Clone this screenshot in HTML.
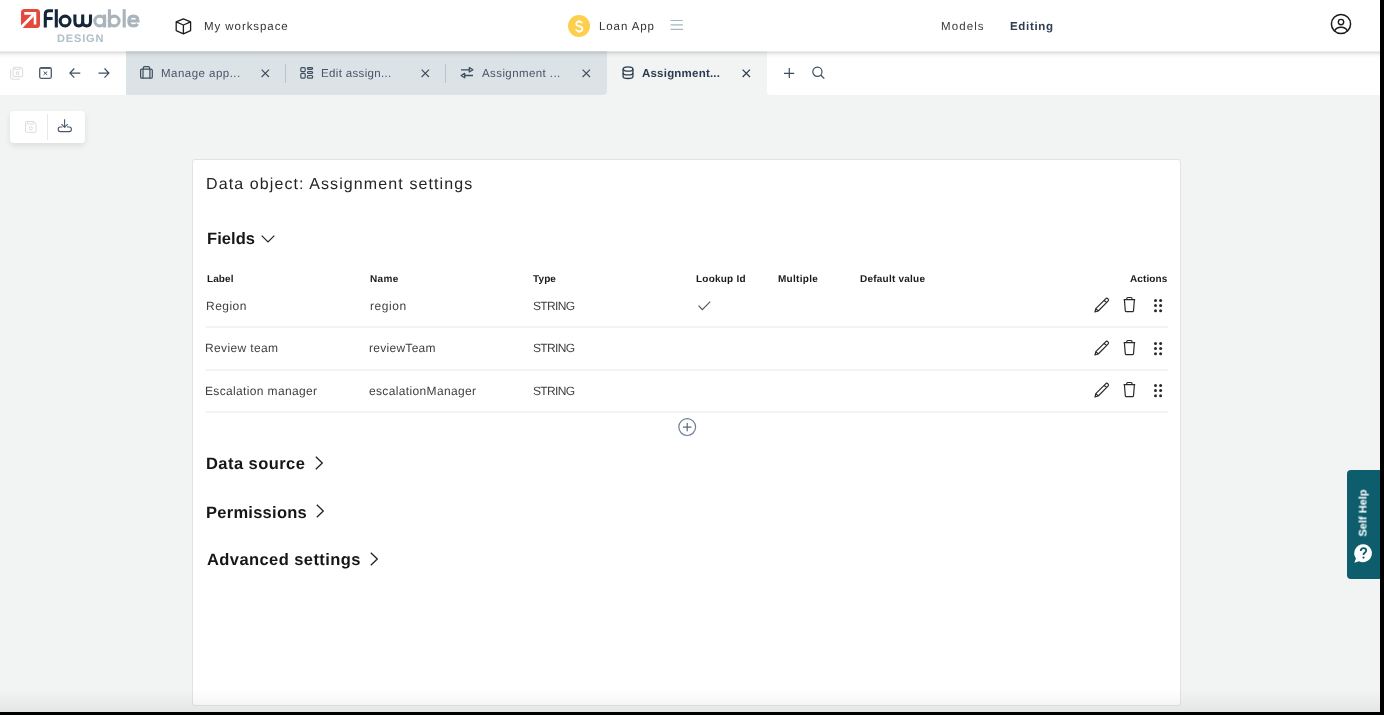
<!DOCTYPE html>
<html><head><meta charset="utf-8">
<style>
*{box-sizing:border-box;margin:0;padding:0}
html,body{width:1384px;height:715px;overflow:hidden;background:#000}
body{font-family:"Liberation Sans",sans-serif;position:relative;text-rendering:geometricPrecision}
#app{position:absolute;left:0;top:0;width:1380px;height:712px;background:#f2f4f4;overflow:hidden}
.a{position:absolute;white-space:nowrap;line-height:1;will-change:transform}
.s12{font-size:12px}
.s115{font-size:11.5px}
.s10{font-size:10px;font-weight:700;color:#1b1b1b}
.s16{font-size:16px}
svg{position:absolute;overflow:visible}
#hdr{position:absolute;left:0;top:0;width:1380px;height:51px;background:#fff}
#tabbar{position:absolute;left:0;top:51px;width:1380px;height:43.6px}
.tab{position:absolute;top:0;height:43.6px;background:#dce3e6}
.tabtxt{color:#475667}
.div{position:absolute;width:1px;background:#b9c4ca}
#card{position:absolute;left:192px;top:159px;width:989px;height:547px;background:#fff;border:1px solid #dfe3e8;border-radius:3px}
.sep{position:absolute;left:206px;width:962px;height:2px;background:#f2f3f5}
.body{color:#3f3f3f}
</style></head><body>
<div id="app">
  <!-- header -->
  <div id="hdr"></div>
  <!-- logo -->
  <svg style="left:0;top:0" width="150" height="50" viewBox="0 0 150 50">
        <rect x="21" y="9" width="19" height="19" rx="3.5" fill="#e34a3b"/>
    <path d="M24.3 13.4H35V24.6" fill="none" stroke="#fff" stroke-width="2.6" stroke-linejoin="miter"/>
    <path d="M33.6 14.8L19 29.4" fill="none" stroke="#fff" stroke-width="2.8"/>
    <g fill="none" stroke="#15263a" stroke-width="3.1">
      <path d="M45.3 27.5V14.2Q45.3 10.7 48.8 10.7H53"/>
      <path d="M45.3 18.5H52.6"/>
      <path d="M56.3 9.2V27.5"/>
      <circle cx="65.1" cy="21" r="4.9"/>
      <path d="M74.9 14.5V21.5Q74.9 25.9 78.8 25.9Q82.7 25.9 82.7 21.5V14.5M82.7 21.5Q82.7 25.9 86.6 25.9Q90.5 25.9 90.5 21.5V14.5"/>
    </g>
    <g fill="none" stroke="#a9b4bd" stroke-width="3.1">
      <circle cx="99.7" cy="21" r="4.9"/>
      <path d="M104.6 14.5V27.5"/>
      <path d="M109.4 9.2V27.5"/>
      <circle cx="114.2" cy="21" r="4.9"/>
      <path d="M124.2 9.2V27.5"/>
      <path d="M128.9 21H138Q138 16.1 133.4 16.1Q128.8 16.1 128.8 21Q128.8 25.9 133.4 25.9Q136.3 25.9 137.6 24"/>
    </g>
  </svg>
  <div class="a" style="left:56.8px;top:34.0px;font-size:11px;font-weight:700;color:#afc0c8;letter-spacing:0.86px">DESIGN</div>

  <!-- workspace -->
  <svg style="left:175px;top:17.5px" width="17" height="17" viewBox="0 0 17 17">
    <path d="M8.4 0.8L15.6 3.9V12.6L8.4 15.8L1.2 12.6V3.9Z M1.2 3.9L8.4 7L15.6 3.9 M8.4 7V15.8" fill="none" stroke="#1e1e1e" stroke-width="1.3" stroke-linejoin="round"/>
  </svg>
  <div class="a s115" style="left:204.0px;top:21.7px;color:#333;letter-spacing:0.93px">My workspace</div>

  <!-- loan app -->
  <div style="position:absolute;left:567.7px;top:14.5px;width:22.3px;height:22.3px;border-radius:50%;background:#fdcf4e"></div>
  <svg style="left:567.7px;top:14.5px" width="23" height="23" viewBox="0 0 23 23">
    <path d="M14.3 8.2Q13.6 6.6 11.2 6.6Q8.3 6.6 8.3 8.8Q8.3 10.6 11.2 11.1Q14.4 11.7 14.4 13.9Q14.4 16.3 11.2 16.3Q8.6 16.3 7.9 14.5 M11.2 4.9V6.6 M11.2 16.3V18.1" fill="none" stroke="#fff" stroke-width="1.7"/>
  </svg>
  <div class="a s115" style="left:599.4px;top:21.8px;color:#333;letter-spacing:0.9px">Loan App</div>
  <svg style="left:670px;top:19px" width="14" height="12" viewBox="0 0 14 12">
    <path d="M0.6 1.5H12.9M0.6 5.8H12.9M0.6 10.4H12.9" stroke="#a3b7c1" stroke-width="1.2"/>
  </svg>

  <div class="a s115" style="left:941.0px;top:21.8px;color:#3b3b3b;letter-spacing:1.1px">Models</div>
  <div class="a s115" style="left:1010.0px;top:21.8px;color:#2d3e50;font-weight:700;letter-spacing:0.69px">Editing</div>
  <svg style="left:1329.5px;top:13.4px" width="22" height="22" viewBox="0 0 22 22">
    <circle cx="11" cy="11" r="9.6" fill="none" stroke="#1a1a1a" stroke-width="1.5"/>
    <circle cx="11" cy="9.1" r="2.7" fill="none" stroke="#1a1a1a" stroke-width="1.4"/>
    <path d="M4.6 18.3Q5.6 14.2 11 14.2Q16.4 14.2 17.4 18.3" fill="none" stroke="#1a1a1a" stroke-width="1.4"/>
  </svg>

  <!-- tab bar -->
  <div id="tabbar">
    <div style="position:absolute;left:0;top:0;width:126px;height:43.6px;background:#fff"></div>
    <div class="tab" style="left:126px;width:480.5px;border-bottom-right-radius:4px"></div>
    <div style="position:absolute;left:766.8px;top:0;width:613.2px;height:43.6px;background:#fff;border-bottom-left-radius:4px"></div>
  </div>
  <!-- header shadow -->
  <div style="position:absolute;left:0;top:51px;width:1380px;height:7px;background:linear-gradient(rgba(0,0,0,0.04) 0px,rgba(0,0,0,0.12) 1.5px,rgba(0,0,0,0.06) 3px,rgba(0,0,0,0.02) 5px,rgba(0,0,0,0) 7px)"></div>

  <!-- tab bar left icons -->
  <svg style="left:5px;top:62px" width="22" height="20" viewBox="0 0 22 20">
    <g fill="none" stroke="#dedfe0" stroke-width="1.1" stroke-linejoin="round">
      <path d="M9.3 5.2H15.6L17.6 7.2V13.4Q17.6 14.6 16.4 14.6H9.3Q8.1 14.6 8.1 13.4V6.4Q8.1 5.2 9.3 5.2Z"/>
      <path d="M9.6 5.2V7.2H14.8V5.2"/>
      <circle cx="12.6" cy="11.2" r="1.3"/>
      <path d="M5.6 7.2V14.8Q5.6 17.3 8.1 17.3H15"/>
    </g>
  </svg>
  <svg style="left:39px;top:67px" width="13" height="12" viewBox="0 0 13 12">
    <rect x="0.7" y="0.7" width="11.6" height="10.6" rx="1.5" fill="none" stroke="#4a5a6c" stroke-width="1.3"/>
    <path d="M1.2 1.4H11.8" stroke="#4a5a6c" stroke-width="1"/>
    <path d="M4.6 4.5L8.2 7.9M8.2 4.5L4.6 7.9" stroke="#3d4e61" stroke-width="1"/>
  </svg>
  <svg style="left:68.5px;top:68px" width="12" height="11" viewBox="0 0 12 11">
    <path d="M11.3 5.1H0.9M5.3 0.5L0.9 5.1L5.3 9.6" fill="none" stroke="#3d4e61" stroke-width="1.2"/>
  </svg>
  <svg style="left:97.5px;top:68px" width="12" height="11" viewBox="0 0 12 11">
    <path d="M0.5 5.1H10.9M6.5 0.5L10.9 5.1L6.5 9.6" fill="none" stroke="#3d4e61" stroke-width="1.2"/>
  </svg>

  <!-- tab 1 -->
  <svg style="left:140px;top:66px" width="14" height="13" viewBox="0 0 14 13">
    <g fill="none" stroke="#3d4e61" stroke-width="1.2">
      <rect x="0.6" y="3.1" width="11.7" height="9.1" rx="1.3"/>
      <path d="M3.4 3.1V1.7Q3.4 0.6 4.5 0.6H8.4Q9.5 0.6 9.5 1.7V3.1"/>
      <path d="M3 3.1V12.2M9.9 3.1V12.2"/>
    </g>
  </svg>
  <div class="a s115 tabtxt" style="left:160.6px;top:68.9px;letter-spacing:0.47px">Manage app...</div>
  <svg style="left:261px;top:69px" width="9" height="9" viewBox="0 0 9 9"><path d="M0.6 0.6L8 8M8 0.6L0.6 8" stroke="#3d4e61" stroke-width="1.15"/></svg>
  <div class="div" style="left:285px;top:64px;height:19px"></div>

  <!-- tab 2 -->
  <svg style="left:296px;top:62px" width="24" height="22" viewBox="0 0 24 22">
    <g fill="none" stroke="#3d4e61" stroke-width="1.2">
      <rect x="4.8" y="5.7" width="4.4" height="4" rx="1.1"/>
      <rect x="4.8" y="11.4" width="4.4" height="4.8" rx="1.1"/>
      <rect x="11.5" y="5.7" width="5.1" height="1.6" rx="0.8"/>
      <rect x="11.5" y="9.5" width="5.1" height="1.8" rx="0.9"/>
      <rect x="11.5" y="13.5" width="5.1" height="2.7" rx="1"/>
    </g>
  </svg>
  <div class="a s115 tabtxt" style="left:320.8px;top:68.9px;letter-spacing:0.34px">Edit assign...</div>
  <svg style="left:421px;top:69px" width="9" height="9" viewBox="0 0 9 9"><path d="M0.6 0.6L8 8M8 0.6L0.6 8" stroke="#3d4e61" stroke-width="1.15"/></svg>
  <div class="div" style="left:445px;top:64px;height:19px"></div>

  <!-- tab 3 -->
  <svg style="left:456px;top:62px" width="24" height="22" viewBox="0 0 24 22">
    <g fill="none" stroke="#3d4e61" stroke-width="1.3" stroke-linejoin="round">
      <path d="M5 7.8H13M9 13.5H17"/>
      <path d="M13.3 5.6L16.9 7.8L13.3 10Z"/>
      <path d="M8.7 11.3L5.1 13.5L8.7 15.7Z"/>
    </g>
  </svg>
  <div class="a s115 tabtxt" style="left:482.0px;top:68.9px;letter-spacing:0.41px">Assignment ...</div>
  <svg style="left:582px;top:69px" width="9" height="9" viewBox="0 0 9 9"><path d="M0.6 0.6L8 8M8 0.6L0.6 8" stroke="#3d4e61" stroke-width="1.15"/></svg>

  <!-- tab 4 active -->
  <svg style="left:621.5px;top:65.8px" width="12" height="14" viewBox="0 0 12 14">
    <g fill="none" stroke="#2b3c50" stroke-width="1.3">
      <ellipse cx="6" cy="3" rx="4.9" ry="2.2"/>
      <path d="M1.1 3V10.4Q1.1 12.5 6 12.5Q10.9 12.5 10.9 10.4V3"/>
      <path d="M1.1 6.9Q1.1 8.9 6 8.9Q10.9 8.9 10.9 6.9"/>
    </g>
  </svg>
  <div class="a s115" style="left:642.2px;top:68.9px;color:#2b3c50;font-weight:700;letter-spacing:0.21px">Assignment...</div>
  <svg style="left:742px;top:69px" width="9" height="9" viewBox="0 0 9 9"><path d="M0.6 0.6L8 8M8 0.6L0.6 8" stroke="#2b3c50" stroke-width="1.25"/></svg>

  <!-- plus / search -->
  <svg style="left:784px;top:67.9px" width="11" height="11" viewBox="0 0 11 11"><path d="M5.3 0V10M0 5.3H10.2" stroke="#3d4e61" stroke-width="1.2"/></svg>
  <svg style="left:811.5px;top:67px" width="14" height="13" viewBox="0 0 14 13">
    <circle cx="5.4" cy="4.7" r="4.6" fill="none" stroke="#3d4e61" stroke-width="1.2"/>
    <path d="M8.7 8L12.3 11.6" stroke="#3d4e61" stroke-width="1.3"/>
  </svg>

  <!-- floating toolbar -->
  <div style="position:absolute;left:10px;top:111px;width:75px;height:32px;background:#fff;border-radius:4px;box-shadow:0 3px 6px rgba(0,0,0,0.09)"></div>
  <div class="div" style="left:47px;top:114px;height:26px;background:#e6e9eb"></div>
  <svg style="left:24.5px;top:121px" width="12" height="12" viewBox="0 0 12 12">
    <g fill="none" stroke="#dadcde" stroke-width="1" stroke-linejoin="round">
      <path d="M1.5 0.5H8.8L11 2.7V10.3Q11 11.3 10 11.3H1.5Q0.5 11.3 0.5 10.3V1.5Q0.5 0.5 1.5 0.5Z"/>
      <path d="M2.3 0.8V3H8.4V0.8"/>
      <circle cx="5.8" cy="7.3" r="1.6"/>
    </g>
  </svg>
  <svg style="left:57px;top:118px" width="16" height="16" viewBox="0 0 16 16">
    <g fill="none" stroke="#4a5a6c" stroke-width="1.1" stroke-linejoin="round">
      <path d="M7.6 1.2V9.4M4.5 6.1L7.6 9.4L10.7 6.1"/>
      <path d="M5.3 9H3.2Q1.2 9 1.2 11.3Q1.2 13.6 3.2 13.6H12.4Q14.4 13.6 14.4 11.3Q14.4 9 12.4 9H10"/>
    </g>
  </svg>

  <!-- card -->
  <div id="card"></div>
  <div class="a s16" style="left:206.0px;top:176.6px;color:#242424;letter-spacing:1.1px">Data object: Assignment settings</div>

  <div class="a" style="font-size:16.5px;left:206.5px;top:231.4px;color:#161616;font-weight:700;letter-spacing:0.07px">Fields</div>
  <svg style="left:261px;top:235px" width="14" height="8" viewBox="0 0 14 8"><path d="M0.7 0.7L7 7L13.3 0.7" fill="none" stroke="#222" stroke-width="1.2"/></svg>

  <!-- table headers -->
  <div class="a s10" style="left:207.0px;top:274.5px;letter-spacing:0.09px">Label</div>
  <div class="a s10" style="left:369.8px;top:274.5px;letter-spacing:0.39px">Name</div>
  <div class="a s10" style="left:533.0px;top:274.5px;letter-spacing:0.1px">Type</div>
  <div class="a s10" style="left:696.0px;top:274.5px;letter-spacing:0.22px">Lookup Id</div>
  <div class="a s10" style="left:777.8px;top:274.5px;letter-spacing:0.29px">Multiple</div>
  <div class="a s10" style="left:860.0px;top:274.5px;letter-spacing:0.23px">Default value</div>
  <div class="a s10" style="left:1130.0px;top:274.5px;letter-spacing:0.11px">Actions</div>

  <!-- rows -->
  <div class="a s12 body" style="left:206.0px;top:299.8px;letter-spacing:0.47px">Region</div>
  <div class="a s12 body" style="left:369.8px;top:299.8px;letter-spacing:0.57px">region</div>
  <div class="a s12 body" style="left:533px;top:299.8px;letter-spacing:-0.67px">STRING</div>
  <svg style="left:698px;top:300.5px" width="13" height="10" viewBox="0 0 13 10"><path d="M0.6 4.6L4.3 8.6L12.2 0.7" fill="none" stroke="#555" stroke-width="1.2"/></svg>
  <div class="sep" style="top:326px"></div>

  <div class="a s12 body" style="left:205.0px;top:342.3px;letter-spacing:0.36px">Review team</div>
  <div class="a s12 body" style="left:369.0px;top:342.3px;letter-spacing:0.28px">reviewTeam</div>
  <div class="a s12 body" style="left:533px;top:342.3px;letter-spacing:-0.67px">STRING</div>
  <div class="sep" style="top:368.5px"></div>

  <div class="a s12 body" style="left:205.0px;top:384.9px;letter-spacing:0.35px">Escalation manager</div>
  <div class="a s12 body" style="left:369.0px;top:384.9px;letter-spacing:0.35px">escalationManager</div>
  <div class="a s12 body" style="left:533px;top:384.9px;letter-spacing:-0.67px">STRING</div>
  <div class="sep" style="top:411px"></div>

  <!-- action icons rows -->
  <svg style="left:1093.5px;top:297px" width="72" height="16" viewBox="0 0 72 16">
    <g fill="none" stroke="#2a2a2a" stroke-width="1.2" stroke-linejoin="round">
      <path d="M1 15L1.8 11.6L11.6 1.8Q12.8 0.6 14 1.8Q15.2 3 14 4.2L4.2 14L1 15Z M10.2 3.2L12.6 5.6 M1.8 11.6L4.2 14"/>
      <path d="M29.6 2.6H41.2 M30.4 2.6L31.3 13.7Q31.4 14.7 32.4 14.7H38.4Q39.4 14.7 39.5 13.7L40.4 2.6 M32.8 2.6V1.4Q32.8 0.5 33.7 0.5H37.1Q38 0.5 38 1.4V2.6"/>
    </g>
    <g fill="#2a2a2a">
      <circle cx="61.5" cy="3.6" r="1.5"/><circle cx="66.6" cy="3.6" r="1.5"/>
      <circle cx="61.5" cy="8.6" r="1.5"/><circle cx="66.6" cy="8.6" r="1.5"/>
      <circle cx="61.5" cy="13.7" r="1.5"/><circle cx="66.6" cy="13.7" r="1.5"/>
    </g>
  </svg>
  <svg style="left:1093.5px;top:339.5px" width="72" height="16" viewBox="0 0 72 16">
    <g fill="none" stroke="#2a2a2a" stroke-width="1.2" stroke-linejoin="round">
      <path d="M1 15L1.8 11.6L11.6 1.8Q12.8 0.6 14 1.8Q15.2 3 14 4.2L4.2 14L1 15Z M10.2 3.2L12.6 5.6 M1.8 11.6L4.2 14"/>
      <path d="M29.6 2.6H41.2 M30.4 2.6L31.3 13.7Q31.4 14.7 32.4 14.7H38.4Q39.4 14.7 39.5 13.7L40.4 2.6 M32.8 2.6V1.4Q32.8 0.5 33.7 0.5H37.1Q38 0.5 38 1.4V2.6"/>
    </g>
    <g fill="#2a2a2a">
      <circle cx="61.5" cy="3.6" r="1.5"/><circle cx="66.6" cy="3.6" r="1.5"/>
      <circle cx="61.5" cy="8.6" r="1.5"/><circle cx="66.6" cy="8.6" r="1.5"/>
      <circle cx="61.5" cy="13.7" r="1.5"/><circle cx="66.6" cy="13.7" r="1.5"/>
    </g>
  </svg>
  <svg style="left:1093.5px;top:382px" width="72" height="16" viewBox="0 0 72 16">
    <g fill="none" stroke="#2a2a2a" stroke-width="1.2" stroke-linejoin="round">
      <path d="M1 15L1.8 11.6L11.6 1.8Q12.8 0.6 14 1.8Q15.2 3 14 4.2L4.2 14L1 15Z M10.2 3.2L12.6 5.6 M1.8 11.6L4.2 14"/>
      <path d="M29.6 2.6H41.2 M30.4 2.6L31.3 13.7Q31.4 14.7 32.4 14.7H38.4Q39.4 14.7 39.5 13.7L40.4 2.6 M32.8 2.6V1.4Q32.8 0.5 33.7 0.5H37.1Q38 0.5 38 1.4V2.6"/>
    </g>
    <g fill="#2a2a2a">
      <circle cx="61.5" cy="3.6" r="1.5"/><circle cx="66.6" cy="3.6" r="1.5"/>
      <circle cx="61.5" cy="8.6" r="1.5"/><circle cx="66.6" cy="8.6" r="1.5"/>
      <circle cx="61.5" cy="13.7" r="1.5"/><circle cx="66.6" cy="13.7" r="1.5"/>
    </g>
  </svg>


  <!-- add -->
  <svg style="left:677.5px;top:418px" width="19" height="19" viewBox="0 0 19 19">
    <circle cx="9.2" cy="9.1" r="8.4" fill="none" stroke="#6b7d93" stroke-width="1.2"/>
    <path d="M9.2 4.9V13.3M5 9.1H13.4" stroke="#55677c" stroke-width="1.2"/>
  </svg>

  <!-- sections -->
  <div class="a" style="font-size:16.5px;left:205.5px;top:455.9px;color:#161616;font-weight:700;letter-spacing:0.44px">Data source</div>
  <svg style="left:315px;top:456.3px" width="9" height="14" viewBox="0 0 9 14"><path d="M0.8 0.8L7.3 7L0.8 13.2" fill="none" stroke="#222" stroke-width="1.3"/></svg>
  <div class="a" style="font-size:16.5px;left:205.5px;top:505.2px;color:#161616;font-weight:700;letter-spacing:0.26px">Permissions</div>
  <svg style="left:316px;top:504.4px" width="9" height="14" viewBox="0 0 9 14"><path d="M0.8 0.8L7.3 7L0.8 13.2" fill="none" stroke="#222" stroke-width="1.3"/></svg>
  <div class="a" style="font-size:16.5px;left:206.5px;top:551.8px;color:#161616;font-weight:700;letter-spacing:0.42px">Advanced settings</div>
  <svg style="left:369.5px;top:552.2px" width="9" height="14" viewBox="0 0 9 14"><path d="M0.8 0.8L7.3 7L0.8 13.2" fill="none" stroke="#222" stroke-width="1.3"/></svg>

  <!-- bottom fade -->
  <div style="position:absolute;left:0;top:690px;width:1380px;height:22px;background:linear-gradient(rgba(0,0,0,0),rgba(0,0,0,0.06))"></div>

  <!-- self help -->
  <div style="position:absolute;left:1347px;top:470px;width:40px;height:109px;background:#0d5d6d;border-radius:4px"></div>
  <div class="a" style="left:1363.5px;top:513px;font-size:11px;font-weight:700;color:#fff;transform:translate(-50%,-50%) rotate(-90deg);transform-origin:center">Self Help</div>
  <svg style="left:1353px;top:543px" width="21" height="21" viewBox="0 0 21 21">
    <path d="M10.5 1.2A9 9 0 1 1 6 18.3L1.3 19.8L3 15.5A9 9 0 0 1 10.5 1.2Z" fill="#fff"/>
    <path d="M7.8 8Q7.8 5.2 10.5 5.2Q13.2 5.2 13.2 7.6Q13.2 9.1 11.6 9.9Q10.5 10.5 10.5 12" fill="none" stroke="#0d5d6d" stroke-width="1.8"/>
    <circle cx="10.5" cy="14.6" r="1.1" fill="#0d5d6d"/>
  </svg>
</div>
</body></html>
